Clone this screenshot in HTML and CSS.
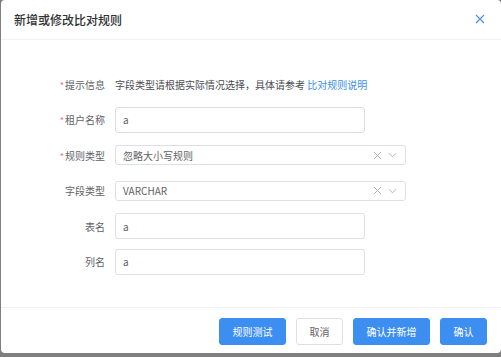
FILE: index.html
```html
<!DOCTYPE html>
<html lang="zh-CN">
<head>
<meta charset="utf-8">
<link rel="stylesheet" href="styles.css">
</head>
<body>
<div class="dialog">
  <div class="dialog-header">
    <span class="dialog-title">新增或修改比对规则</span>
    <svg class="close" viewBox="0 0 10 10" width="10" height="10"><path d="M1 1L9 9M9 1L1 9" stroke="#4b8ee0" stroke-width="1.1" fill="none"/></svg>
  </div>
  <div class="dialog-body">
    <div class="row">
      <label class="label"><span class="star">*</span>提示信息</label>
      <div class="hint">字段类型请根据实际情况选择，具体请参考 <a class="link">比对规则说明</a></div>
    </div>
    <div class="row">
      <label class="label"><span class="star">*</span>租户名称</label>
      <div class="input">a</div>
    </div>
    <div class="row">
      <label class="label"><span class="star">*</span>规则类型</label>
      <div class="select">
        <span class="select-text">忽略大小写规则</span>
        <svg class="icon-x" viewBox="0 0 10 10" width="9" height="9"><path d="M1 1L9 9M9 1L1 9" stroke="#a8abb2" stroke-width="1" fill="none"/></svg>
        <svg class="icon-chev" viewBox="0 0 10 6" width="9" height="6"><path d="M1 1L5 5L9 1" stroke="#a8abb2" stroke-width="1" fill="none"/></svg>
      </div>
    </div>
    <div class="row">
      <label class="label">字段类型</label>
      <div class="select">
        <span class="select-text">VARCHAR</span>
        <svg class="icon-x" viewBox="0 0 10 10" width="9" height="9"><path d="M1 1L9 9M9 1L1 9" stroke="#a8abb2" stroke-width="1" fill="none"/></svg>
        <svg class="icon-chev" viewBox="0 0 10 6" width="9" height="6"><path d="M1 1L5 5L9 1" stroke="#a8abb2" stroke-width="1" fill="none"/></svg>
      </div>
    </div>
    <div class="row">
      <label class="label">表名</label>
      <div class="input">a</div>
    </div>
    <div class="row">
      <label class="label">列名</label>
      <div class="input">a</div>
    </div>
  </div>
  <div class="dialog-footer">
    <button class="btn primary">规则测试</button>
    <button class="btn">取消</button>
    <button class="btn primary">确认并新增</button>
    <button class="btn primary">确认</button>
  </div>
</div>
</body>
</html>
```

FILE: styles.css
```css
* { box-sizing: border-box; }
html, body {
  margin: 0;
  padding: 0;
  background: #7f7f7f;
  width: 501px;
  height: 357px;
  overflow: hidden;
  font-family: "Noto Sans CJK SC", "Noto Sans", "Liberation Sans", sans-serif;
}
.dialog {
  margin-left: 1px;
  width: 500px;
  height: 353px;
  background: #fff;
  border-radius: 4px;
  display: flex;
  flex-direction: column;
}
.dialog-header {
  height: 40px;
  border-bottom: 1px solid #f0f1f4;
  display: flex;
  align-items: center;
  justify-content: space-between;
  padding: 0 16px 1px 13px;
}
.dialog-title {
  font-size: 12px;
  font-weight: 500;
  color: #303133;
}
.close { display: block; }
.dialog-body {
  flex: 1;
  padding-top: 31px;
  display: flex;
  flex-direction: column;
  gap: 9.5px;
}
.row {
  display: flex;
  align-items: center;
  height: 26px;
}
.label {
  width: 114px;
  flex: none;
  padding-right: 10px;
  text-align: right;
  font-size: 10px;
  color: #606266;
  white-space: nowrap;
}
.star {
  color: #f56c6c;
  font-size: 9px;
  margin-right: 1px;
}
.hint {
  font-size: 10px;
  color: #4a4c52;
}
.link {
  color: #3a8ee6;
  cursor: pointer;
}
.input {
  width: 250px;
  height: 26px;
  border: 1px solid #dcdfe6;
  border-radius: 3px;
  padding: 0 7px;
  display: flex;
  align-items: center;
  font-size: 10px;
  color: #606266;
}
.select {
  width: 291px;
  height: 20px;
  border: 1px solid #dcdfe6;
  border-radius: 3px;
  padding: 0 7px;
  display: flex;
  align-items: center;
  font-size: 10px;
  color: #606266;
}
.select-text { flex: 1; }
.icon-x { display: block; margin-right: 6px; }
.icon-chev { display: block; margin-right: 1px; }
.dialog-footer {
  height: 46px;
  border-top: 1px solid #f0f1f4;
  display: flex;
  justify-content: flex-end;
  align-items: flex-start;
  padding: 10px 14px 0 0;
  gap: 10px;
}
.btn {
  height: 27px;
  padding: 0 12.5px;
  border: 1px solid #dcdfe6;
  border-radius: 3px;
  background: #fff;
  color: #606266;
  font-family: "Noto Sans CJK SC", "Noto Sans", sans-serif;
  font-size: 10px;
}
.btn.primary {
  background: #3c8ff0;
  border-color: #3c8ff0;
  color: #fff;
}
```
